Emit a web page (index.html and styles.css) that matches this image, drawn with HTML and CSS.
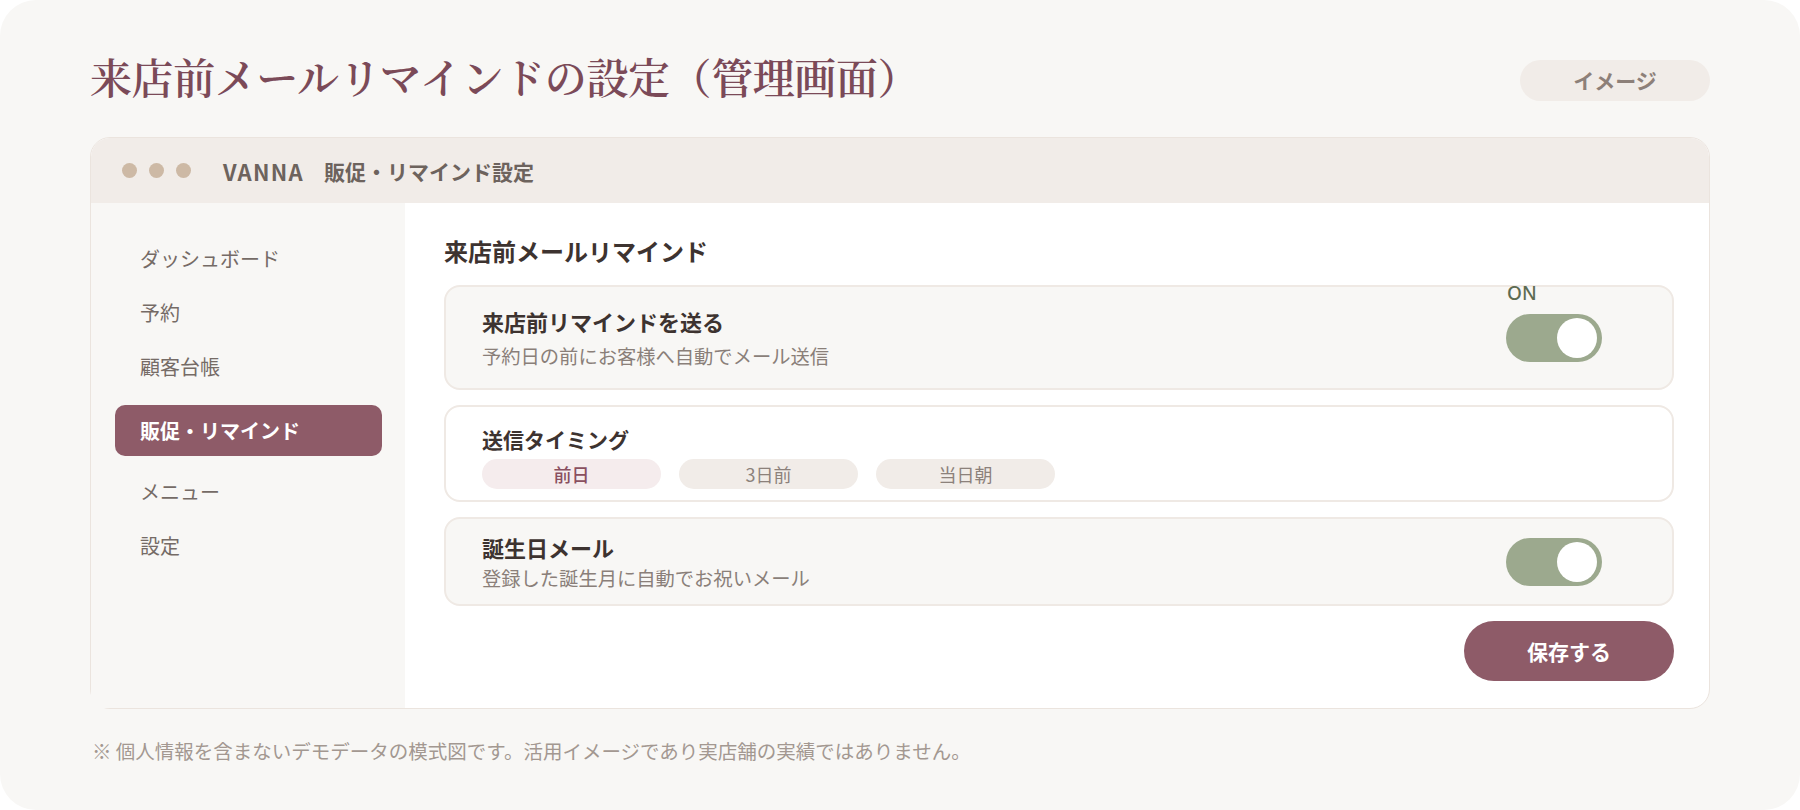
FILE: index.html
```html
<!DOCTYPE html>
<html lang="ja">
<head>
    <meta charset="UTF-8">
    <meta name="viewport" content="width=device-width, initial-scale=1.0">
    <title>来店前メールリマインドの設定</title>
    <link rel="stylesheet" href="styles.css">
</head>
<body>
    <div class="page">
        <header class="top">
            <h1 class="page-title">来店前メールリマインドの設定（管理画面）</h1>
            <span class="badge">イメージ</span>
        </header>

        <div class="window">
            <div class="win-bar">
                <div class="dots">
                    <span class="dot"></span>
                    <span class="dot"></span>
                    <span class="dot"></span>
                </div>
                <span class="win-brand">VANNA</span>
                <span class="win-title">販促・リマインド設定</span>
            </div>

            <div class="win-body">
                <nav class="side">
                    <a class="nav-item">ダッシュボード</a>
                    <a class="nav-item">予約</a>
                    <a class="nav-item">顧客台帳</a>
                    <a class="nav-item active">販促・リマインド</a>
                    <a class="nav-item">メニュー</a>
                    <a class="nav-item">設定</a>
                </nav>

                <main class="content">
                    <h2 class="sec-title">来店前メールリマインド</h2>

                    <div class="card card-gray card-remind">
                        <div class="card-text">
                            <p class="card-title">来店前リマインドを送る</p>
                            <p class="card-sub">予約日の前にお客様へ自動でメール送信</p>
                        </div>
                        <div class="toggle">
                            <span class="toggle-label">ON</span>
                            <span class="knob"></span>
                        </div>
                    </div>

                    <div class="card card-timing">
                        <p class="card-title small">送信タイミング</p>
                        <div class="chips">
                            <span class="chip selected">前日</span>
                            <span class="chip">3日前</span>
                            <span class="chip">当日朝</span>
                        </div>
                    </div>

                    <div class="card card-gray card-birthday">
                        <div class="card-text">
                            <p class="card-title">誕生日メール</p>
                            <p class="card-sub tight">登録した誕生月に自動でお祝いメール</p>
                        </div>
                        <div class="toggle">
                            <span class="knob"></span>
                        </div>
                    </div>

                    <div class="actions">
                        <button class="save">保存する</button>
                    </div>
                </main>
            </div>
        </div>

        <p class="note">※ 個人情報を含まないデモデータの模式図です。活用イメージであり実店舗の実績ではありません。</p>
    </div>
</body>
</html>
```

FILE: styles.css
```css
* {
    box-sizing: border-box;
}
body {
    margin: 0;
    background: #ffffff;
    font-family: "Noto Sans CJK JP", "Noto Sans", sans-serif;
}
.page {
    width: 1800px;
    height: 810px;
    background: #f8f7f5;
    border-radius: 36px;
    padding: 46px 90px 0 90px;
}

/* title row */
.top {
    display: flex;
    justify-content: space-between;
    align-items: center;
    height: 60px;
}
.page-title {
    margin: 0;
    font-family: "Noto Serif CJK JP", "Noto Sans CJK JP", serif;
    font-size: 42px;
    font-weight: 600;
    color: #7b4a58;
    letter-spacing: -0.01em;
}
.badge {
    width: 190px;
    height: 41px;
    margin-top: 8px;
    border-radius: 21px;
    background: #f1ece8;
    color: #8d8079;
    font-size: 21px;
    font-weight: 700;
    display: flex;
    align-items: center;
    justify-content: center;
}

/* window */
.window {
    margin-top: 31px;
    width: 1620px;
    background: #ffffff;
    border: 1px solid #ebe4de;
    border-radius: 20px;
}
.win-bar {
    height: 65px;
    background: #f1ece8;
    border-radius: 19px 19px 0 0;
    display: flex;
    align-items: center;
    padding-left: 31px;
}
.dots {
    display: flex;
    gap: 12px;
}
.dot {
    width: 15px;
    height: 15px;
    border-radius: 50%;
    background: #cdb9a5;
}
.win-brand {
    margin-left: 32px;
    font-size: 22px;
    font-weight: 600;
    color: #6d635d;
    letter-spacing: 0.06em;
}
.win-title {
    margin-left: 20px;
    font-size: 21px;
    font-weight: 600;
    color: #6d635d;
}
.win-body {
    display: flex;
}

/* sidebar */
.side {
    width: 314px;
    background: #f8f7f5;
    padding: 32px 23px 0 24px;
    display: flex;
    flex-direction: column;
    gap: 8px;
}
.nav-item {
    height: 46px;
    display: flex;
    align-items: center;
    padding-left: 25px;
    font-size: 20px;
    color: #756b66;
}
.nav-item.active {
    height: 51px;
    margin: 8px 0 4px 0;
    border-radius: 10px;
    background: #8e5b68;
    color: #ffffff;
    font-weight: 700;
}

/* main */
.content {
    flex: 1;
    padding: 31px 35px 27px 39px;
    display: flex;
    flex-direction: column;
    gap: 15px;
}
.sec-title {
    margin: 0 0 2px 0;
    font-size: 24px;
    font-weight: 700;
    color: #3d3330;
    line-height: 34px;
}
.card {
    border: 2px solid #efe9e4;
    border-radius: 16px;
    background: #ffffff;
    padding: 0 36px;
}
.card-gray {
    background: #f8f7f5;
}
.card-remind,
.card-birthday {
    display: flex;
    justify-content: space-between;
    align-items: center;
}
.card-remind {
    height: 105px;
}
.card-birthday {
    height: 89px;
}
.card-title {
    margin: 0;
    font-size: 22px;
    font-weight: 700;
    color: #3d3330;
    line-height: 31px;
}
.card-title.small {
    font-size: 21px;
    line-height: 28px;
}
.card-sub {
    margin: 6px 0 0 0;
    font-size: 19.3px;
    color: #8a7f79;
    line-height: 26px;
}
.card-sub.tight {
    margin-top: 2px;
}

.card-timing {
    height: 97px;
    padding-top: 18px;
}
.chips {
    display: flex;
    gap: 18px;
    margin-top: 6px;
}
.chip {
    width: 179px;
    height: 30px;
    border-radius: 15px;
    background: #f1ece8;
    color: #8c817b;
    font-size: 18px;
    display: flex;
    align-items: center;
    justify-content: center;
}
.chip.selected {
    background: #f5eced;
    color: #8a4f5f;
    font-weight: 500;
}

/* toggle */
.toggle {
    position: relative;
    width: 96px;
    height: 48px;
    border-radius: 24px;
    background: #9ca98e;
    margin-right: 34px;
}
.knob {
    position: absolute;
    top: 4px;
    right: 5px;
    width: 40px;
    height: 40px;
    border-radius: 50%;
    background: #ffffff;
}
.toggle-label {
    position: absolute;
    left: 1px;
    top: -34px;
    font-family: "Noto Sans", sans-serif;
    font-size: 19px;
    font-weight: 500;
    color: #5d6b52;
}

.actions {
    display: flex;
    justify-content: flex-end;
}
.save {
    width: 210px;
    height: 60px;
    border: none;
    border-radius: 30px;
    background: #8e5b68;
    color: #ffffff;
    font-family: "Noto Sans CJK JP", sans-serif;
    font-size: 21px;
    font-weight: 700;
}

.note {
    margin: 29px 0 0 2px;
    font-size: 19.5px;
    color: #a39891;
    line-height: 26px;
}
```
